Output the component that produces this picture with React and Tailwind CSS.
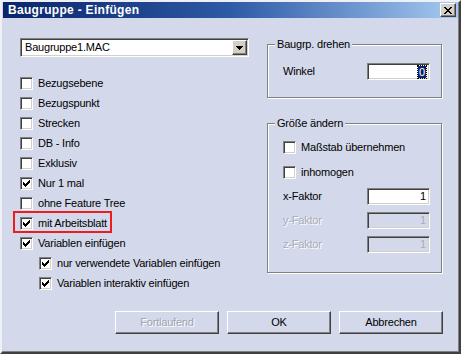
import React from "react";

const font = { fontFamily: '"Liberation Sans", Arial, sans-serif' };

function Check() {
  const cols = [2, 3, 4, 3, 2, 1, 0];
  return (
    <svg width="7" height="7" viewBox="0 0 7 7" shapeRendering="crispEdges" className="block">
      {cols.map((y, x) => (
        <rect key={x} x={x} y={y} width="1" height="3" fill="#000" />
      ))}
    </svg>
  );
}

function Box({ checked }) {
  return (
    <span className="w-[13px] h-[13px] shrink-0 bg-white border border-t-[#808080] border-l-[#808080] border-r-white border-b-white shadow-[inset_1px_1px_0_#404040,inset_-1px_-1px_0_#d4d0c8] flex items-center justify-center">
      {checked && <Check />}
    </span>
  );
}

function CheckRow({ label, checked, indent, boxed }) {
  return (
    <div className={`h-[20px] flex items-center gap-[5px] relative ${indent ? "pl-[19px]" : ""}`}>
      {boxed && (
        <span className="absolute left-[-7px] top-[-2px] w-[99px] h-[22px] border-2 border-[#ee1c1c]" />
      )}
      <Box checked={checked} />
      <span className="text-[11px] tracking-[-0.2px] text-black leading-none">{label}</span>
    </div>
  );
}

function Field({ value, disabled, selected }) {
  return (
    <div
      className={`w-[63px] h-[17px] border border-t-[#808080] border-l-[#808080] border-r-white border-b-white shadow-[inset_1px_1px_0_#404040,inset_-1px_-1px_0_#d4d0c8] flex items-center justify-end pr-[3px] text-[11px] ${
        disabled ? "bg-[#d3d9ea] text-[#a8acb8]" : "bg-white text-black"
      }`}
    >
      {selected ? (
        <span className="bg-[#0a246a] text-white px-[1px] leading-[12px] outline-1 outline-dotted outline-black">{value}</span>
      ) : (
        <span className="leading-none">{value}</span>
      )}
    </div>
  );
}

function Group({ label, className, children }) {
  return (
    <div className={`relative border border-[#808080] shadow-[inset_1px_1px_0_#fff,1px_1px_0_#fff] ${className}`}>
      <span className="absolute left-[7px] top-[-8px] px-[2px] bg-[#d3d9ea] text-[11px] tracking-[-0.2px] leading-[14px] text-black">
        {label}
      </span>
      {children}
    </div>
  );
}

function Button({ children, disabled }) {
  return (
    <div className="w-[104px] h-[23px] bg-[#d3d9ea] border border-t-white border-l-white border-r-[#404040] border-b-[#404040] shadow-[inset_-1px_-1px_0_#808080] flex items-center justify-center">
      <span className={`text-[11px] tracking-[-0.2px] leading-none ${disabled ? "text-[#a0a4b0] [text-shadow:1px_1px_0_#fff]" : "text-black"}`}>
        {children}
      </span>
    </div>
  );
}

function CloseX() {
  const px = [
    "##....##",
    ".##..##.",
    "..####..",
    "...##...",
    "..####..",
    ".##..##.",
    "##....##",
  ];
  const rects = [];
  px.forEach((row, y) =>
    row.split("").forEach((c, x) => {
      if (c === "#") rects.push(<rect key={`${x}-${y}`} x={x} y={y} width="1" height="1" fill="#000" />);
    })
  );
  return (
    <svg width="8" height="7" viewBox="0 0 8 7" shapeRendering="crispEdges" className="block">
      {rects}
    </svg>
  );
}

function Arrow() {
  return (
    <svg width="7" height="4" viewBox="0 0 7 4" shapeRendering="crispEdges" className="block">
      <rect x="0" y="0" width="7" height="1" fill="#000" />
      <rect x="1" y="1" width="5" height="1" fill="#000" />
      <rect x="2" y="2" width="3" height="1" fill="#000" />
      <rect x="3" y="3" width="1" height="1" fill="#000" />
    </svg>
  );
}

export default function App() {
  const rows = [
    ["Bezugsebene", false],
    ["Bezugspunkt", false],
    ["Strecken", false],
    ["DB - Info", false],
    ["Exklusiv", false],
    ["Nur 1 mal", true],
    ["ohne Feature Tree", false],
    ["mit Arbeitsblatt", true, false, true],
    ["Variablen einfügen", true],
    ["nur verwendete Variablen einfügen", true, true],
    ["Variablen interaktiv einfügen", true, true],
  ];
  return (
    <div
      style={font}
      className="w-[461px] h-[354px] flex flex-col bg-[#d3d9ea] border-2 border-t-[#eef0f6] border-l-[#eef0f6] border-r-[#404040] border-b-[#404040] shadow-[inset_-1px_-1px_0_#808080] px-[1px]"
    >
      <div className="h-[16px] shrink-0 flex items-center justify-between bg-gradient-to-r from-[#0a246a] via-[#2f5aa6] to-[#a6caf0] pl-[5px] pr-[2px]">
        <span className="text-white font-bold text-[12px] tracking-[0.3px] leading-none">Baugruppe - Einfügen</span>
        <div className="w-[16px] h-[14px] bg-[#d4d0c8] border border-t-white border-l-white border-r-[#404040] border-b-[#404040] shadow-[inset_-1px_-1px_0_#808080] flex items-center justify-center">
          <CloseX />
        </div>
      </div>

      <div className="flex-1 flex flex-col">
        <div className="flex">
          <div className="ml-[17px] w-[229px] flex flex-col">
            <div className="mt-[20px] h-[19px] bg-white border border-t-[#808080] border-l-[#808080] border-r-white border-b-white shadow-[inset_1px_1px_0_#404040,inset_-1px_-1px_0_#d4d0c8] flex items-center justify-between pl-[4px] pr-[1px]">
              <span className="text-[11px] tracking-[-0.2px] leading-none text-black">Baugruppe1.MAC</span>
              <div className="w-[15px] h-[15px] bg-[#d4d0c8] border border-t-white border-l-white border-r-[#404040] border-b-[#404040] shadow-[inset_-1px_-1px_0_#808080] flex items-center justify-center">
                <Arrow />
              </div>
            </div>
            <div className="mt-[16px] flex flex-col">
              {rows.map(([label, checked, indent, boxed]) => (
                <CheckRow key={label} label={label} checked={checked} indent={indent} boxed={boxed} />
              ))}
            </div>
          </div>

          <div className="ml-[18px] w-[175px] flex flex-col">
            <Group label="Baugrp. drehen" className="mt-[26px] h-[54px]">
              <div className="pt-[18px] pl-[15px] flex items-center">
                <span className="w-[84px] text-[11px] tracking-[-0.2px] leading-none text-black">Winkel</span>
                <Field value="0" selected />
              </div>
            </Group>

            <Group label="Größe ändern" className="mt-[25px] h-[150px]">
              <div className="pt-[15px] pl-[15px] flex flex-col">
                <div className="h-[16px] flex items-center gap-[5px]">
                  <Box />
                  <span className="text-[11px] tracking-[-0.2px] leading-none text-black">Maßstab übernehmen</span>
                </div>
                <div className="mt-[9px] h-[16px] flex items-center gap-[5px]">
                  <Box />
                  <span className="text-[11px] tracking-[-0.2px] leading-none text-black">inhomogen</span>
                </div>
                <div className="mt-[8px] flex items-center">
                  <span className="w-[84px] text-[11px] tracking-[-0.2px] leading-none text-black">x-Faktor</span>
                  <Field value="1" />
                </div>
                <div className="mt-[7px] flex items-center">
                  <span className="w-[84px] text-[11px] tracking-[-0.2px] leading-none text-[#a8acb8] [text-shadow:1px_1px_0_#fff]">y-Faktor</span>
                  <Field value="1" disabled />
                </div>
                <div className="mt-[7px] flex items-center">
                  <span className="w-[84px] text-[11px] tracking-[-0.2px] leading-none text-[#a8acb8] [text-shadow:1px_1px_0_#fff]">z-Faktor</span>
                  <Field value="1" disabled />
                </div>
              </div>
            </Group>
          </div>
        </div>

        <div className="mt-auto mb-[18px] pr-[15px] flex justify-end gap-[8px]">
          <Button disabled>Fortlaufend</Button>
          <Button>OK</Button>
          <Button>Abbrechen</Button>
        </div>
      </div>
    </div>
  );
}
